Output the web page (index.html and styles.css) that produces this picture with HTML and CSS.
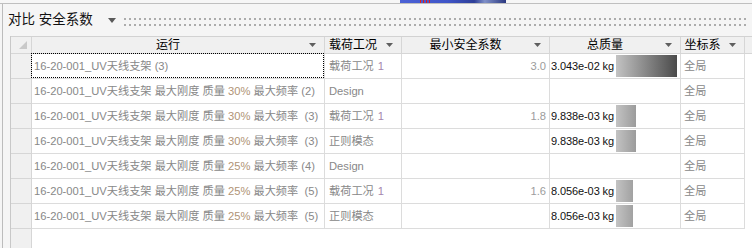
FILE: index.html
```html
<!DOCTYPE html>
<html>
<head>
<meta charset="utf-8">
<link rel="stylesheet" href="styles.css">
</head>
<body>
<div class="top"><div class="top-pic"><span class="red"></span></div></div>
<div class="panel">
  <div class="titlebar">
    <span class="title">对比 安全系数</span>
    <svg class="title-tri" width="8" height="5" viewBox="0 0 8 5"><polygon points="0,0 8,0 4,5" fill="#5a5a5a"/></svg>
    <div class="dots"></div>
  </div>
  <div class="grid">
    <div class="hrow">
      <div class="hc rh"><svg class="corner" width="8" height="8" viewBox="0 0 8 8"><polygon points="8,0 8,8 0,8" fill="#c9c9c9"/></svg></div>
      <div class="hc c1"><span class="lbl">运行</span><svg class="arr" width="7" height="4" viewBox="0 0 7 4"><polygon points="0,0 7,0 3.5,4" fill="#5f5f5f"/></svg></div>
      <div class="hc c2"><span class="lbl">载荷工况</span><svg class="arr" width="7" height="4" viewBox="0 0 7 4"><polygon points="0,0 7,0 3.5,4" fill="#5f5f5f"/></svg></div>
      <div class="hc c3"><span class="lbl">最小安全系数</span><svg class="arr" width="7" height="4" viewBox="0 0 7 4"><polygon points="0,0 7,0 3.5,4" fill="#5f5f5f"/></svg></div>
      <div class="hc c4"><span class="lbl">总质量</span><svg class="arr" width="7" height="4" viewBox="0 0 7 4"><polygon points="0,0 7,0 3.5,4" fill="#5f5f5f"/></svg></div>
      <div class="hc c5"><span class="lbl">坐标系</span><svg class="arr" width="7" height="4" viewBox="0 0 7 4"><polygon points="0,0 7,0 3.5,4" fill="#5f5f5f"/></svg></div>
      <div class="hc hfill"></div>
    </div>

    <div class="row">
      <div class="cell rh"></div>
      <div class="cell c1 focus">16-20-001_UV天线支架 (3)</div>
      <div class="cell c2">载荷工况 <span class="num1">1</span></div>
      <div class="cell c3 sf">3.0</div>
      <div class="cell c4"><span class="mass">3.043e-02 kg</span><span class="bar" style="width:61px"></span></div>
      <div class="cell c5">全局</div>
    </div>
    <div class="row">
      <div class="cell rh"></div>
      <div class="cell c1">16-20-001_UV天线支架 最大刚度 质量 <span class="pct">30%</span> 最大频率 (2)</div>
      <div class="cell c2">Design</div>
      <div class="cell c3 sf"></div>
      <div class="cell c4"></div>
      <div class="cell c5">全局</div>
    </div>
    <div class="row">
      <div class="cell rh"></div>
      <div class="cell c1">16-20-001_UV天线支架 最大刚度 质量 <span class="pct">30%</span> 最大频率&nbsp; (3)</div>
      <div class="cell c2">载荷工况 <span class="num1">1</span></div>
      <div class="cell c3 sf">1.8</div>
      <div class="cell c4"><span class="mass">9.838e-03 kg</span><span class="bar" style="width:20px"></span></div>
      <div class="cell c5">全局</div>
    </div>
    <div class="row">
      <div class="cell rh"></div>
      <div class="cell c1">16-20-001_UV天线支架 最大刚度 质量 <span class="pct">30%</span> 最大频率&nbsp; (3)</div>
      <div class="cell c2">正则模态</div>
      <div class="cell c3 sf"></div>
      <div class="cell c4"><span class="mass">9.838e-03 kg</span><span class="bar" style="width:20px"></span></div>
      <div class="cell c5">全局</div>
    </div>
    <div class="row">
      <div class="cell rh"></div>
      <div class="cell c1">16-20-001_UV天线支架 最大刚度 质量 <span class="pct">25%</span> 最大频率 (4)</div>
      <div class="cell c2">Design</div>
      <div class="cell c3 sf"></div>
      <div class="cell c4"></div>
      <div class="cell c5">全局</div>
    </div>
    <div class="row">
      <div class="cell rh"></div>
      <div class="cell c1">16-20-001_UV天线支架 最大刚度 质量 <span class="pct">25%</span> 最大频率&nbsp; (5)</div>
      <div class="cell c2">载荷工况 <span class="num1">1</span></div>
      <div class="cell c3 sf">1.6</div>
      <div class="cell c4"><span class="mass">8.056e-03 kg</span><span class="bar" style="width:17px"></span></div>
      <div class="cell c5">全局</div>
    </div>
    <div class="row">
      <div class="cell rh"></div>
      <div class="cell c1">16-20-001_UV天线支架 最大刚度 质量 <span class="pct">25%</span> 最大频率&nbsp; (5)</div>
      <div class="cell c2">正则模态</div>
      <div class="cell c3 sf"></div>
      <div class="cell c4"><span class="mass">8.056e-03 kg</span><span class="bar" style="width:17px"></span></div>
      <div class="cell c5">全局</div>
    </div>
    <div class="fill"><div class="rh fill-rh"></div></div>
  </div>
</div>
</body>
</html>
```

FILE: styles.css
```css
html, body {
  margin: 0;
  padding: 0;
}
body {
  width: 752px;
  height: 248px;
  overflow: hidden;
  background: #f5f5f5;
  font-family: "Liberation Sans", "Noto Sans CJK SC", sans-serif;
}
.top {
  height: 3px;
  border-bottom: 1px solid #bfbfbf;
  background: #f6f6f6;
  display: flex;
  padding-left: 400px;
}
.top-pic {
  width: 106px;
  height: 3px;
  background: linear-gradient(90deg, #4c62d6 0%, #3f55c8 45%, #2e3f98 70%, #8090c8 80%, #2a3880 100%);
  display: flex;
  padding-left: 20px;
  box-sizing: border-box;
}
.red {
  width: 10px;
  height: 3px;
  background: repeating-linear-gradient(90deg, #e02020 0 1px, transparent 1px 3px);
}
.panel {
  margin-left: 2px;
  border-left: 1px solid #bcbcbc;
  height: 244px;
  display: flex;
  flex-direction: column;
}
.titlebar {
  height: 32px;
  display: flex;
  align-items: center;
  padding-left: 5px;
  flex: none;
}
.title {
  font-size: 13.5px;
  color: #111;
  line-height: 32px;
  white-space: nowrap;
}
.title-tri {
  margin-left: 15px;
  flex: none;
}
.dots {
  flex: 1;
  align-self: flex-start;
  margin-top: 14px;
  margin-left: 8px;
  margin-right: 4px;
  height: 8px;
  background-image:
    linear-gradient(90deg, #acacac 0 2px, transparent 2px),
    linear-gradient(90deg, #acacac 0 2px, transparent 2px);
  background-size: 5px 2px, 5px 2px;
  background-position: 0 0, 0 6px;
  background-repeat: repeat-x;
}
.grid {
  flex: 1;
  margin-left: 7px;
  border-left: 1px solid #c8c8c8;
  background: #fff;
  display: flex;
  flex-direction: column;
}
.hrow {
  display: flex;
  border-top: 1px solid #d2d2d2;
  background: #f0f0f0;
  flex: none;
}
.hc {
  box-sizing: border-box;
  height: 17px;
  border-right: 1px solid #d6d6d6;
  border-bottom: 1px solid #d6d6d6;
  display: flex;
  align-items: center;
  font-size: 12px;
  color: #000;
  white-space: nowrap;
}
.hfill {
  flex: 1;
  border-right: none;
}
.lbl {
  flex: 1;
  text-align: center;
  line-height: 16px;
}
.arr {
  flex: none;
  margin: 0 8px 0 5px;
}
.corner {
  margin: 0 0 0 8px;
}
.rh { width: 21px; flex: none; }
.c1 { width: 293px; flex: none; }
.c2 { width: 77px; flex: none; }
.c3 { width: 148px; flex: none; }
.c4 { width: 131px; flex: none; }
.c5 { width: 64px; flex: none; }

.row {
  display: flex;
  height: 25px;
  flex: none;
}
.cell {
  box-sizing: border-box;
  height: 25px;
  border-right: 1px solid #dcdcdc;
  border-bottom: 1px solid #dcdcdc;
  font-size: 11.2px;
  color: #888;
  line-height: 24px;
  white-space: nowrap;
  overflow: hidden;
}
.cell.rh {
  background: #f0f0f0;
  border-color: #d6d6d6;
}
.cell.c1 { padding-left: 2px; }
.cell.c2 { padding-left: 4px; }
.cell.c5 { padding-left: 3px; }
.cell.sf {
  text-align: right;
  padding-right: 3px;
  color: #9c9c9c;
}
.cell.c4 {
  padding-left: 1px;
  display: flex;
  align-items: center;
}
.focus {
  position: relative;
  overflow: visible;
}
.focus::after {
  content: "";
  position: absolute;
  left: -1px;
  top: -1px;
  right: 0;
  bottom: 0;
  border: 1px dotted #000;
  pointer-events: none;
}
.num1 {
  color: #a486ae;
  margin-left: 1px;
}
.pct {
  color: #b09476;
}
.mass {
  width: 65px;
  flex: none;
  font-size: 11px;
  color: #111;
  letter-spacing: -0.1px;
}
.bar {
  align-self: flex-start;
  margin-top: 1px;
  height: 22px;
  flex: none;
  background: linear-gradient(90deg, #c3c3c3, #4a4a4a) 0 0 / 61px 100% no-repeat;
}
.fill {
  flex: 1;
  display: flex;
}
.fill-rh {
  background: #f0f0f0;
  border-right: 1px solid #d6d6d6;
  box-sizing: border-box;
}
```
